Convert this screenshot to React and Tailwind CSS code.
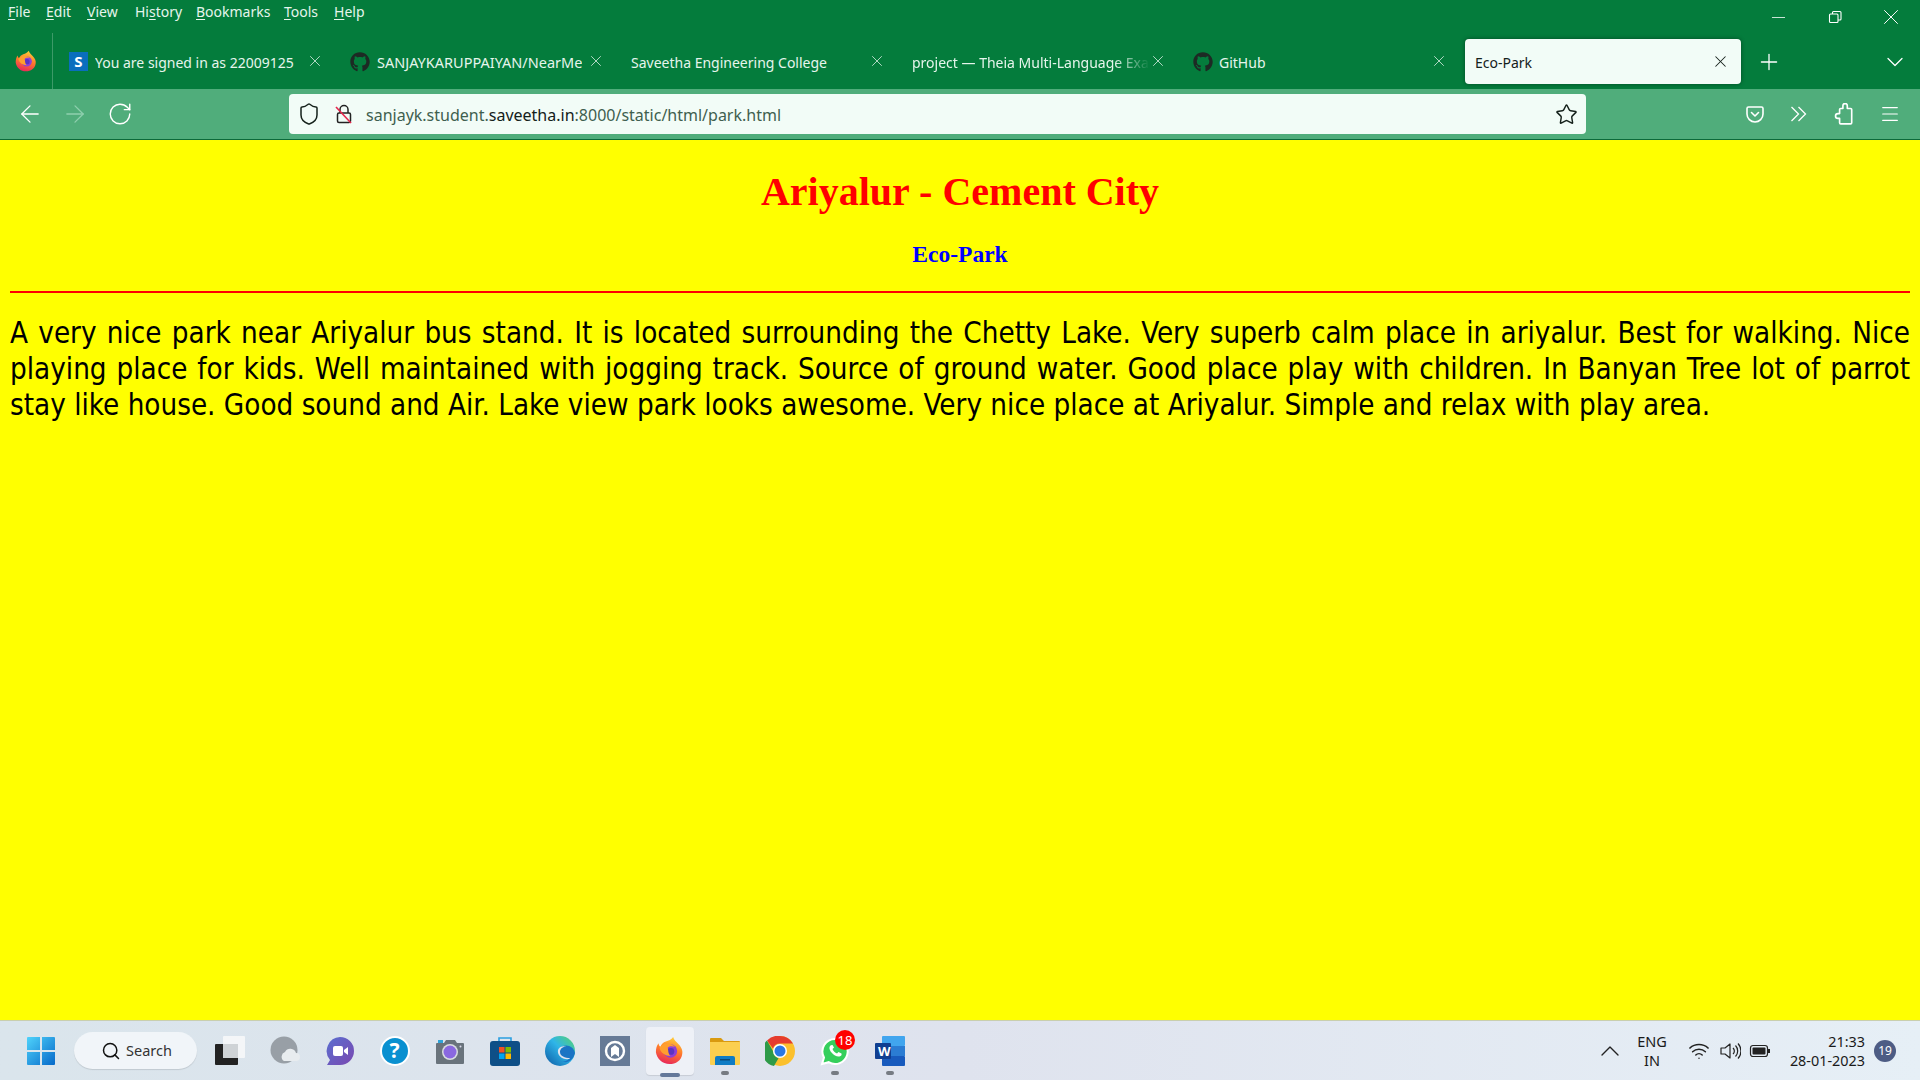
import React from 'react';
import { ArrowLeft, ArrowRight, RotateCw, Shield, Star, Menu, Plus, ChevronDown, ChevronUp, X, Minus, Search, Wifi } from 'lucide-react';
import { FaGithub } from 'react-icons/fa';

const uiFont = "font-['Noto_Sans','Open_Sans',sans-serif]";

const menuItems = [
  { pre: '', key: 'F', post: 'ile', width: 'w-[38px]' },
  { pre: '', key: 'E', post: 'dit', width: 'w-[41px]' },
  { pre: '', key: 'V', post: 'iew', width: 'w-[48px]' },
  { pre: 'Hi', key: 's', post: 'tory', width: 'w-[61px]' },
  { pre: '', key: 'B', post: 'ookmarks', width: 'w-[88px]' },
  { pre: '', key: 'T', post: 'ools', width: 'w-[50px]' },
  { pre: '', key: 'H', post: 'elp', width: 'w-[40px]' },
];

const FirefoxIcon = ({ size = 22 }) => (
  <svg width={size} height={size} viewBox="0 0 32 32">
    <defs>
      <linearGradient id="ffa" x1="0.7" y1="0" x2="0.4" y2="1">
        <stop offset="0" stopColor="#ffd23a" />
        <stop offset="0.5" stopColor="#ff7a2b" />
        <stop offset="1" stopColor="#e8275a" />
      </linearGradient>
    </defs>
    <path d="M20 1c1 3 3 5 6 8 3 3 5 7 4 11-1 7-7 11-14 11C8 31 2 25 1 18c0-4 1-8 3-10 0 2 1 3 2 4 1-3 3-5 6-6 3-1 6-2 8-5z" fill="url(#ffa)" />
    <circle cx="17" cy="16.500" r="7.500" fill="#8f3fd6" />
    <circle cx="17.500" cy="17" r="3.800" fill="#5a33c4" />
    <path d="M5 13c2-4 8-6 13-4 2 1 3 2 4 3-3-1-6-1-8 1 1 3 0 6 3 9-5 0-11-3-12-9z" fill="#ff9f2e" />
  </svg>
);

const Tab = ({ icon, title, fade, wide }) => (
  <div className="w-[281px] h-[45px] flex items-center px-3 relative text-[#e6f5ec] shrink-0">
    {icon && <div className="w-[26px] shrink-0 flex items-center">{icon}</div>}
    <span className={`pt-[2px] whitespace-nowrap overflow-hidden ${wide ? 'text-[14.500px] pl-[1px]' : 'text-[14px]'} ${fade ? 'w-[238px] [mask-image:linear-gradient(to_right,black_85%,transparent)]' : ''}`}>{title}</span>
    <X className="absolute right-[14px] top-[13px] w-[18px] h-[18px] text-[#d5ebdf]" strokeWidth={1.1} />
  </div>
);

const App = () => {
  return (
    <div className={`h-screen w-full flex flex-col overflow-hidden ${uiFont}`}>
      {/* window chrome */}
      <div className="bg-[#047c3c]">
        <div className="h-[30px] flex items-center pl-2 text-[14px] text-[#e6f5ec]">
          <div className="flex items-center pb-[8px]">
            {menuItems.map((m, i) => (
              <span key={i} className={m.width}>
                {m.pre}<span className="underline underline-offset-2">{m.key}</span>{m.post}
              </span>
            ))}
          </div>
          <div className="ml-auto flex items-center text-white pr-[16px] pt-[4px]">
            <Minus className="w-[21px] h-[21px]" strokeWidth={0.9} />
            <svg className="ml-[38px]" width="16" height="16" viewBox="0 0 16 16" fill="none" stroke="currentColor" strokeWidth="1.100">
              <rect x="2.500" y="5" width="8.500" height="8.500" rx="1" />
              <path d="M5.500 5V3.500a1 1 0 0 1 1-1H13a1 1 0 0 1 1 1V10a1 1 0 0 1-1 1h-2" />
            </svg>
            <X className="ml-[35px] w-[26px] h-[26px]" strokeWidth={0.9} />
          </div>
        </div>
        <div className="h-[59px] flex items-start">
          <div className="w-[53px] h-[56px] mt-[3px] border-r border-[#3d9a68] flex items-center justify-center">
            <FirefoxIcon />
          </div>
          <div className="flex items-center ml-[4px] mt-[9px] h-[45px]">
            <Tab
              title="You are signed in as 22009125"
              icon={<div className="w-[19px] h-[19px] bg-[#0a6ebd] text-white font-bold text-[15px] leading-[19px] text-center">S</div>}
            />
            <Tab wide title="SANJAYKARUPPAIYAN/NearMe" icon={<FaGithub className="w-[20px] h-[20px] text-[#1d2a24]" />} />
            <Tab title="Saveetha Engineering College" />
            <Tab title="project — Theia Multi-Language Example" fade />
            <Tab title="GitHub" icon={<FaGithub className="w-[20px] h-[20px] text-[#1d2a24]" />} />
            <div className="w-[276px] h-[45px] ml-[3px] bg-[#f2fcf7] rounded-[4px] shadow-[0_0_4px_rgba(0,0,0,0.4)] flex items-center pl-[10px] pr-[11px] text-[14px] text-[#15211b] shrink-0">
              <span className="pt-[2px]">Eco-Park</span>
              <X className="ml-auto w-[19px] h-[19px]" strokeWidth={1.3} />
            </div>
            <Plus className="ml-[15px] w-[26px] h-[26px] text-white" strokeWidth={1.2} />
            <ChevronDown className="ml-[99px] w-[28px] h-[28px] text-white" strokeWidth={1.1} />
          </div>
        </div>
        {/* toolbar */}
        <div className="h-[51px] bg-[#50ad7b] border-b border-[#0b6a3a] flex items-center">
          <div className="w-[289px] flex items-center pl-[16px] gap-[17px] text-white">
            <ArrowLeft className="w-[28px] h-[28px]" strokeWidth={1.1} />
            <ArrowRight className="w-[28px] h-[28px] text-[#8fcfae]" strokeWidth={1.1} />
            <RotateCw className="ml-[1px] w-[26px] h-[26px]" strokeWidth={1.3} />
          </div>
          <div className="w-[1297px] h-[40px] bg-[#f2fcf7] rounded-[4px] flex items-center pl-[8px] pr-[8px] text-[16px]">
            <Shield className="w-[24px] h-[24px] text-[#15211b]" strokeWidth={1.5} />
            <svg className="ml-[13px]" width="20" height="22" viewBox="0 0 20 22" fill="none">
              <path d="M6 10V6.500a4 4 0 0 1 8 0V10" stroke="#222" strokeWidth="1.500" />
              <rect x="3.500" y="10" width="13" height="9.500" rx="1.500" stroke="#222" strokeWidth="1.500" />
              <path d="M2 4l15 16" stroke="#e5274d" strokeWidth="1.700" />
            </svg>
            <span className="ml-[12px] pt-[2px] text-[#3f5f4f] whitespace-nowrap">
              sanjayk.student.<span className="text-[#14201a]">saveetha.in</span>:8000/static/html/park.html
            </span>
            <Star className="ml-auto w-[23px] h-[23px] text-[#15211b]" strokeWidth={1.5} />
          </div>
          <div className="ml-auto flex items-center gap-[24px] pr-[19px] text-white">
            <svg width="20" height="20" viewBox="0 0 20 20" fill="none" stroke="currentColor" strokeWidth="1.600">
              <path d="M3.500 3h13A1.500 1.500 0 0 1 18 4.500V10a8 8 0 0 1-16 0V4.500A1.500 1.500 0 0 1 3.500 3z" />
              <path d="M6.500 8.500L10 12l3.500-3.500" strokeLinecap="round" strokeLinejoin="round" />
            </svg>
            <svg width="20" height="20" viewBox="0 0 20 20" fill="none" stroke="currentColor" strokeWidth="1.300">
              <path d="M2.500 3l7 7-7 7M9.500 3l7 7-7 7" />
            </svg>
            <svg width="22" height="22" viewBox="0 0 20 20" fill="none" stroke="currentColor" strokeWidth="1.500" strokeLinejoin="round">
              <path d="M9 2.500a2 2 0 0 1 4 0V5h3a1 1 0 0 1 1 1v12a1 1 0 0 1-1 1H7a1 1 0 0 1-1-1v-4H4.500a2.200 2.200 0 0 1 0-4.400H6V6a1 1 0 0 1 1-1h2z" />
            </svg>
            <Menu className="w-[22px] h-[22px]" strokeWidth={1.2} />
          </div>
        </div>
      </div>

      {/* page */}
      <main className="flex-1 bg-[#ffff00] px-[10px] overflow-hidden">
        <h1 className="mt-[29px] text-center font-['Liberation_Serif',serif] font-bold text-[40px] leading-[46px] text-[#ff0000]">Ariyalur - Cement City</h1>
        <h3 className="mt-[25px] text-center font-['Liberation_Serif',serif] font-bold text-[23.500px] leading-[28px] text-[#0000ff]">Eco-Park</h3>
        <hr className="mt-[23px] border-0 h-[2px] bg-[#ff0000]" />
        <p className="mt-[22px] font-['DejaVu_Sans_Condensed','DejaVu_Sans',sans-serif] [font-stretch:condensed] text-[29.300px] leading-[36px] text-black text-justify">
          A very nice park near Ariyalur bus stand. It is located surrounding the Chetty Lake. Very superb calm place in ariyalur. Best for walking. Nice playing place for kids. Well maintained with jogging track. Source of ground water. Good place play with children. In Banyan Tree lot of parrot stay like house. Good sound and Air. Lake view park looks awesome. Very nice place at Ariyalur. Simple and relax with play area.
        </p>
      </main>

      {/* taskbar */}
      <footer className="h-[60px] border-t border-[#c9cfae] bg-gradient-to-r from-[#dae5ec] via-[#dfe3ee] to-[#e6eff6] flex items-center relative text-[#1a1a1a]">
        <div className="w-[74px] flex justify-center pl-[8px]">
          <svg width="30" height="30" viewBox="0 0 30 30">
            <defs>
              <linearGradient id="win" x1="0" y1="0" x2="1" y2="1">
                <stop offset="0" stopColor="#4fd3fb" />
                <stop offset="1" stopColor="#0669c9" />
              </linearGradient>
            </defs>
            <path d="M1 2a1 1 0 0 1 1-1h12v13H1zM16 1h12a1 1 0 0 1 1 1v12H16zM1 16h13v13H2a1 1 0 0 1-1-1zM16 16h13v12a1 1 0 0 1-1 1H16z" fill="url(#win)" />
          </svg>
        </div>
        <div className="w-[123px] h-[37px] rounded-full bg-[#f1f5f9] shadow-[0_1px_1px_rgba(0,0,0,0.12)] flex items-center pl-[27px] text-[14.500px] text-[#333]">
          <Search className="w-[20px] h-[20px] text-[#111]" strokeWidth={1.8} />
          <span className="ml-[5px]">Search</span>
        </div>
        <div className="flex items-center ml-[5px]">
          {/* task view */}
          <div className="w-[55px] flex justify-center">
            <svg width="30" height="30" viewBox="0 0 30 30">
              <rect x="8" y="0" width="22" height="22" rx="1" fill="#f4f6f8" />
              <rect x="0" y="8" width="23" height="21" rx="1" fill="#222" />
              <rect x="8" y="8" width="15" height="14" fill="#cfd3d6" />
            </svg>
          </div>
          {/* widgets */}
          <div className="w-[55px] flex justify-center">
            <svg width="30" height="30" viewBox="0 0 30 30">
              <circle cx="14" cy="14" r="13.500" fill="#989fa6" />
              <path d="M14 25a5 5 0 0 1 1-9 6 6 0 0 1 11 1 4 4 0 0 1 0 8z" fill="#e8ecef" />
            </svg>
          </div>
          {/* meet */}
          <div className="w-[55px] flex justify-center">
            <svg width="30" height="30" viewBox="0 0 30 30">
              <defs>
                <linearGradient id="meet" x1="0" y1="0" x2="1" y2="1">
                  <stop offset="0" stopColor="#5a6fd0" />
                  <stop offset="1" stopColor="#7a48b0" />
                </linearGradient>
              </defs>
              <path d="M15 1a14 14 0 0 1 0 28H2l3-5A14 14 0 0 1 15 1z" fill="url(#meet)" />
              <rect x="8" y="10" width="10" height="10" rx="2" fill="#fff" />
              <path d="M19 14l4-3v8l-4-3z" fill="#fff" />
            </svg>
          </div>
          {/* help */}
          <div className="w-[55px] flex justify-center">
            <div className="w-[30px] h-[30px] rounded-full bg-[#0a90d0] border-2 border-white text-white font-bold text-[21px] leading-[25px] text-center">?</div>
          </div>
          {/* camera */}
          <div className="w-[55px] flex justify-center">
            <svg width="30" height="30" viewBox="0 0 30 30">
              <path d="M2 7h7l2-3h9l2 3h6a1 1 0 0 1 1 1v19a1 1 0 0 1-1 1H2a1 1 0 0 1-1-1V8a1 1 0 0 1 1-1z" fill="#69737c" />
              <rect x="3" y="4" width="5" height="3" fill="#2fa3d8" />
              <circle cx="15" cy="16" r="8" fill="#d9dde0" />
              <circle cx="15" cy="16" r="6.500" fill="#8a68e0" />
              <circle cx="25.500" cy="10.500" r="1" fill="#dde" />
            </svg>
          </div>
          {/* store */}
          <div className="w-[55px] flex justify-center">
            <svg width="30" height="30" viewBox="0 0 30 30">
              <path d="M9 5V2h12v3" fill="none" stroke="#2b9fe0" strokeWidth="1.600" />
              <rect x="0" y="5" width="30" height="25" rx="3" fill="#0e4f87" />
              <rect x="9" y="11" width="5.500" height="5.500" fill="#f25022" />
              <rect x="15.500" y="11" width="5.500" height="5.500" fill="#7fba00" />
              <rect x="9" y="17.500" width="5.500" height="5.500" fill="#00a4ef" />
              <rect x="15.500" y="17.500" width="5.500" height="5.500" fill="#ffb900" />
            </svg>
          </div>
          {/* edge */}
          <div className="w-[55px] flex justify-center">
            <svg width="30" height="30" viewBox="0 0 30 30">
              <defs>
                <linearGradient id="edge" x1="0" y1="1" x2="1" y2="0">
                  <stop offset="0" stopColor="#0c59a4" />
                  <stop offset="0.55" stopColor="#2fb5e8" />
                  <stop offset="1" stopColor="#58d468" />
                </linearGradient>
              </defs>
              <circle cx="15" cy="15" r="15" fill="url(#edge)" />
              <path d="M30 17c-1-6-7-9-12-7-3 1-5 4-4 7 1 4 6 6 11 5-3 3-6 4-9 3 6 3 12 0 14-8z" fill="#1a74c4" />
              <path d="M13 14c1-3 5-5 9-3-4-1-7 2-7 5 0 4 5 6 10 6l-1 1c-6 1-12-3-11-9z" fill="#dfe3ee" />
            </svg>
          </div>
          {/* theia */}
          <div className="w-[55px] flex justify-center">
            <div className="w-[30px] h-[30px] bg-[#667a96] flex items-center justify-center">
              <svg width="22" height="22" viewBox="0 0 22 22" fill="none">
                <circle cx="11" cy="11" r="9" stroke="#fff" strokeWidth="2.400" />
                <path d="M7 17V8l4-3 4 3v9l-4-3z" fill="#fff" />
              </svg>
            </div>
          </div>
          {/* firefox */}
          <div className="w-[55px] flex justify-center relative">
            <div className="w-[48px] h-[48px] rounded-[4px] bg-[#eef1f7] shadow-[0_1px_1px_rgba(0,0,0,0.1)] flex items-center justify-center">
              <FirefoxIcon size={29} />
            </div>
            <div className="absolute left-[18px] -bottom-[2px] w-[20px] h-[4px] rounded-full bg-[#64789a]" />
          </div>
          {/* explorer */}
          <div className="w-[55px] flex justify-center relative">
            <svg width="30" height="30" viewBox="0 0 30 30">
              <path d="M0 3a1 1 0 0 1 1-1h10l3 3h15a1 1 0 0 1 1 1v4H0z" fill="#d99a10" />
              <path d="M0 6h30v22a1 1 0 0 1-1 1H1a1 1 0 0 1-1-1z" fill="#fbcf4f" />
              <path d="M5 29v-7a2 2 0 0 1 2-2h16a2 2 0 0 1 2 2v7z" fill="#0f7cc4" />
              <rect x="10" y="23" width="10" height="1.500" fill="#0a4a7a" />
            </svg>
            <div className="absolute left-[24px] -bottom-[9px] w-[8px] h-[4px] rounded-full bg-[#767b82]" />
          </div>
          {/* chrome */}
          <div className="w-[55px] flex justify-center">
            <svg width="30" height="30" viewBox="0 0 30 30">
              <circle cx="15" cy="15" r="15" fill="#fbc02d" />
              <path d="M15 0a15 15 0 0 1 13 7.500H15a7.500 7.500 0 0 0-7 5L2 4.500A15 15 0 0 1 15 0z" fill="#e53c2e" />
              <path d="M2 4.500l6.500 11.500a7.500 7.500 0 0 0 5 6.300L9 30A15 15 0 0 1 2 4.500z" fill="#2e9a48" />
              <circle cx="15" cy="15" r="7" fill="#fff" />
              <circle cx="15" cy="15" r="5.500" fill="#2a78e4" />
            </svg>
          </div>
          {/* whatsapp */}
          <div className="w-[55px] flex justify-center relative">
            <svg width="30" height="30" viewBox="0 0 30 30">
              <path d="M15 3a12.500 12.500 0 0 0-11 18.500L2 28l6.700-1.800A12.500 12.500 0 1 0 15 3z" fill="#35cf5c" stroke="#fff" strokeWidth="2" />
              <path d="M10.500 9.500c-1.500 1.500-1.500 4 1 7s5.500 4.500 8 4c1.500-.3 2.500-1.500 2-3l-3-1.500-1.500 1.500c-2-.8-3.700-2.500-4.500-4.500l1.500-1.500L12.500 9c-.7-.3-1.400 0-2 .5z" fill="#fff" />
            </svg>
            <div className="absolute left-[28px] -top-[6px] w-[20px] h-[20px] rounded-full bg-[#f00] text-white text-[13px] leading-[20px] text-center">18</div>
            <div className="absolute left-[24px] -bottom-[9px] w-[8px] h-[4px] rounded-full bg-[#767b82]" />
          </div>
          {/* word */}
          <div className="w-[55px] flex justify-center relative">
            <svg width="30" height="30" viewBox="0 0 30 30">
              <rect x="7" y="0" width="23" height="10" rx="1" fill="#41a5ee" />
              <rect x="7" y="10" width="23" height="10" fill="#2b7cd3" />
              <rect x="7" y="20" width="23" height="10" rx="1" fill="#185abd" />
              <rect x="0" y="7" width="16" height="16" rx="1" fill="#103f91" />
            </svg>
            <span className="absolute left-[16px] top-[7px] text-white font-bold text-[13px] leading-[16px]">W</span>
            <div className="absolute left-[24px] -bottom-[9px] w-[8px] h-[4px] rounded-full bg-[#767b82]" />
          </div>
        </div>
        {/* tray */}
        <div className="ml-auto flex items-center pr-[24px]">
          <ChevronUp className="-ml-[4px] w-[32px] h-[32px] text-[#222]" strokeWidth={1} />
          <div className="ml-[4px] w-[44px] text-center text-[14.500px] leading-[19px]">ENG<br />IN</div>
          <Wifi className="ml-[14px] w-[22px] h-[22px] text-[#222]" strokeWidth={1.6} />
          <svg className="ml-[9px]" width="22" height="22" viewBox="0 0 22 22" fill="none" stroke="#222" strokeWidth="1.200">
            <path d="M2 8h4l5-4v14l-5-4H2z" strokeLinejoin="round" />
            <path d="M14 8a4 4 0 0 1 0 6M16.500 5.500a8 8 0 0 1 0 11M19 3.500a11 11 0 0 1 0 15" />
          </svg>
          <svg className="ml-[8px]" width="22" height="22" viewBox="0 0 22 22" fill="none">
            <rect x="1.500" y="5.500" width="17" height="11" rx="2.500" stroke="#222" strokeWidth="1.200" />
            <rect x="3.500" y="7.500" width="13" height="7" rx="1" fill="#222" />
            <rect x="19" y="9" width="2" height="4" fill="#222" />
          </svg>
          <div className="ml-[9px] w-[85px] text-right text-[14.400px] leading-[19px]">21:33<br />28-01-2023</div>
          <div className="ml-[9px] w-[22px] h-[22px] rounded-full bg-[#4d5c84] text-white text-[12px] leading-[22px] text-center">19</div>
        </div>
      </footer>
    </div>
  );
};

export default App;
